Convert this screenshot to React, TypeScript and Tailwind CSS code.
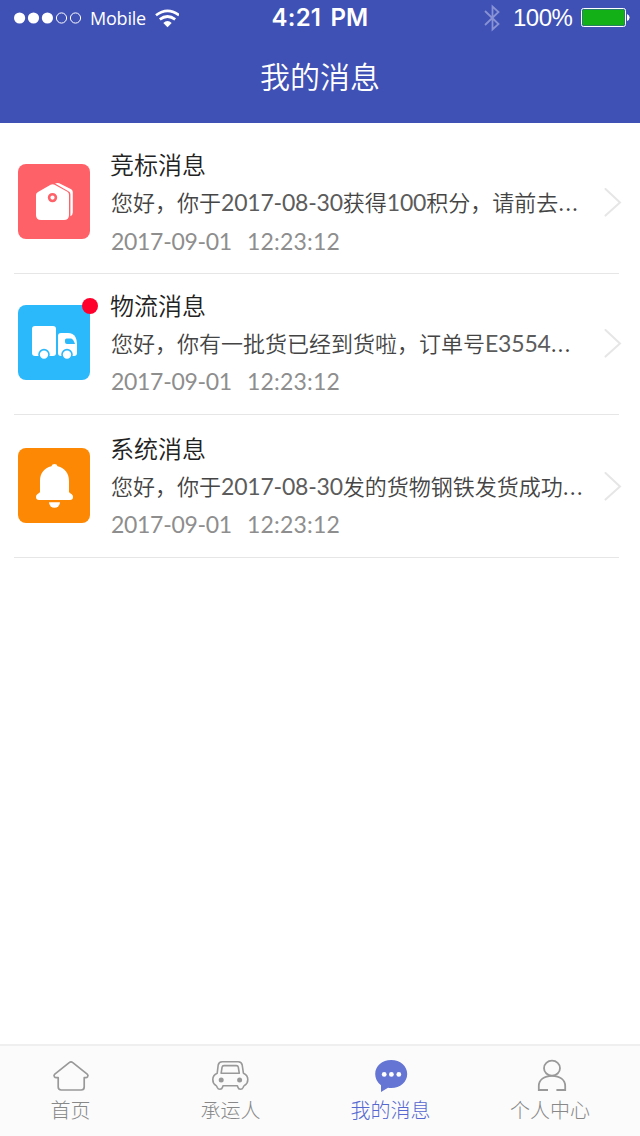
import type { ReactNode } from 'react';

const Chevron = () => (
  <svg className="h-[30px] w-[18px] shrink-0" viewBox="0 0 18 30" fill="none" stroke="#e6e6e6" strokeWidth="2">
    <path d="M1.5 2 16 15.4 1.5 28.6" strokeLinecap="round" />
  </svg>
);

const TagIcon = () => (
  <svg className="h-[75px] w-[72px]" viewBox="0 0 72 75">
    <path d="M37 19.6Q39 18.4 41.2 19.2L53.2 25.3Q54.8 26.2 54.8 28V48.5Q54.8 51 52.4 52.3V30.2Q52.4 28.4 50.8 27.6Z" fill="#fff" />
    <path d="M32.6 20.8Q34.6 19.7 36.6 20.7L49.4 27.8Q51 28.8 51 30.7V51Q51 56 46 56H23Q18 56 18 51V31Q18 29.2 19.6 28.2Z" fill="#fff" />
    <circle cx="34.5" cy="33.6" r="3.4" fill="none" stroke="#ff6169" strokeWidth="2.6" />
  </svg>
);

const TruckIcon = () => (
  <svg className="h-[75px] w-[72px]" viewBox="0 0 72 75">
    <rect x="14" y="21" width="24" height="30" rx="3" fill="#fff" />
    <path d="M43 28H50Q55 28 57.4 32Q59 35 59 39V48Q59 51 56 51H43Q40 51 40 48V31Q40 28 43 28Z" fill="#fff" />
    <path d="M48.5 33.4H52.5Q55.5 33.4 57 39H49Q47 39 47 37V35Q47 33.4 48.5 33.4Z" fill="#2cb9fc" />
    <circle cx="26" cy="49.6" r="5" fill="#fff" stroke="#2cb9fc" strokeWidth="1.6" />
    <circle cx="49" cy="49.6" r="5" fill="#fff" stroke="#2cb9fc" strokeWidth="1.6" />
  </svg>
);

const BellIcon = () => (
  <svg className="h-[75px] w-[72px]" viewBox="0 0 72 75" fill="#fff">
    <path d="M33.4 18.3A3.2 3.2 0 0 1 39.6 18.3C47 20 51 25.5 51 33V43.5C51 45.8 55 45.5 55 49Q55 52 52 52H21Q18 52 18 49C18 45.5 22 45.8 22 43.5V33C22 25.5 26 20 33.4 18.3Z" />
    <path d="M31 54.3H42A5.5 5.5 0 0 1 31 54.3Z" />
  </svg>
);

type Message = {
  title: string;
  text: string[];
  date: string;
  time: string;
  icon: ReactNode;
  color: string;
  row: string;
  timeClass: string;
  unread?: boolean;
};

// text alternates between Chinese and latin runs, the ellipsis is added after it
const messages: Message[] = [
  {
    title: '竞标消息',
    text: ['您好，你于', '2017-08-30', '获得', '100', '积分，请前去'],
    date: '2017-09-01',
    time: '12:23:12',
    icon: <TagIcon />,
    color: 'bg-[#ff6169]',
    row: 'h-[151px] pt-6',
    timeClass: 'h-9 leading-[38px]',
  },
  {
    title: '物流消息',
    text: ['您好，你有一批货已经到货啦，订单号', 'E3554'],
    date: '2017-09-01',
    time: '12:23:12',
    icon: <TruckIcon />,
    color: 'bg-[#2cb9fc]',
    row: 'h-[141px] pt-3.5',
    timeClass: 'h-[34px] leading-9',
    unread: true,
  },
  {
    title: '系统消息',
    text: ['您好，你于', '2017-08-30', '发的货物钢铁发货成功'],
    date: '2017-09-01',
    time: '12:23:12',
    icon: <BellIcon />,
    color: 'bg-[#fd8803]',
    row: 'h-[143px] pt-4',
    timeClass: 'h-[34px] leading-9',
  },
];

const HomeIcon = () => (
  <svg className="h-9 w-10" viewBox="0 0 40 36" fill="none" stroke="#999" strokeWidth="1.7" strokeLinejoin="round">
    <path d="M18.2 4.6Q20 3.2 21.8 4.6L36.2 16.2Q37.6 17.5 36.6 18.8Q36 19.7 34.5 19.7H33.2V29Q33.2 32 30.2 32H10.2Q7.2 32 7.2 29V19.7H5.5Q4 19.7 3.4 18.8Q2.4 17.5 3.8 16.2Z" />
  </svg>
);

const CarIcon = () => (
  <svg className="h-9 w-10" viewBox="0 0 40 36" fill="none" stroke="#999" strokeWidth="1.6" strokeLinejoin="round">
    <g transform="translate(-1 0)">
      <path d="M12.2 3.8H28.2Q31.6 3.8 32.2 7L33.4 15.2Q37.8 17.2 37.8 21.5Q37.8 25.5 34.8 27.2Q33.6 28 33.1 29.5Q32.4 31.2 30.5 31.2Q28.4 31.2 27.9 29.2L27.4 27.7H13L12.5 29.2Q12 31.2 9.9 31.2Q8 31.2 7.3 29.5Q6.8 28 5.6 27.2Q2.8 25.5 2.8 21.5Q2.8 17.2 7.2 15.2L8.2 7Q8.8 3.8 12.2 3.8Z" />
      <path d="M14 7.6H26.4Q28 7.6 28.3 9.2L29.3 15.3H11.1L12.1 9.2Q12.4 7.6 14 7.6Z" />
      <circle cx="11.2" cy="22" r="2.5" fill="#999" stroke="none" />
      <circle cx="29.6" cy="22" r="2.5" fill="#999" stroke="none" />
    </g>
  </svg>
);

const ChatIcon = () => (
  <svg className="h-9 w-10" viewBox="0 0 40 36">
    <path d="M20.2 2C29.2 2 36.2 8 36.2 16S29.2 30 20.2 30Q18.4 30 17 29.8L10 34V27.2Q4.2 23 4.2 16C4.2 8 11.2 2 20.2 2Z" fill="#6475d4" />
    <g fill="#fff">
      <circle cx="13.2" cy="16.4" r="2.4" />
      <circle cx="20.4" cy="16.4" r="2.4" />
      <circle cx="27.8" cy="16.4" r="2.4" />
    </g>
  </svg>
);

const UserIcon = () => (
  <svg className="h-9 w-10" viewBox="0 0 40 36" fill="none" stroke="#999" strokeWidth="1.8">
    <ellipse cx="22" cy="10.2" rx="8" ry="7.5" />
    <path d="M18 32H8.8V28C8.8 22 14 17.8 22 17.8S35.2 22 35.2 28V32H26.4" />
  </svg>
);

const tabs = [
  { label: '首页', icon: <HomeIcon />, shift: 'pr-[19px]' },
  { label: '承运人', icon: <CarIcon />, shift: 'pr-[19px]' },
  { label: '我的消息', icon: <ChatIcon />, shift: 'pr-[19px]', active: true },
  { label: '个人中心', icon: <UserIcon />, shift: 'pr-[20px]' },
];

function StatusBar() {
  return (
    <div className="flex h-9 items-center text-white">
      <div className="flex w-[258px] items-center pl-3.5">
        <svg className="h-3 w-[68px]" viewBox="0 0 68 12" fill="#fff">
          <circle cx="5.6" cy="6" r="5.6" />
          <circle cx="19.5" cy="6" r="5.6" />
          <circle cx="33.4" cy="6" r="5.6" />
          <circle cx="47.5" cy="6" r="5.1" fill="none" stroke="#fff" />
          <circle cx="61.5" cy="6" r="5.1" fill="none" stroke="#fff" />
        </svg>
        <span className="ml-2 w-[65px] font-['Open_Sans',sans-serif] text-[18px] leading-[34px] tracking-[-0.2px]">Mobile</span>
        <svg className="h-[19px] w-6" viewBox="0 0 24 19" fill="none" stroke="#fff" strokeWidth="2.7">
          <path d="M1 6.2Q12.5-2.6 24 6.2" />
          <path d="M4.8 10.4Q12.5 4.6 20.2 10.4" />
          <path d="M8.3 14Q12.5 10 16.7 14L12.5 18.2Z" fill="#fff" stroke="none" />
        </svg>
      </div>
      <span className="w-[124px] whitespace-nowrap text-center font-['Inter','Liberation_Sans',sans-serif] text-[24px] font-semibold leading-9 tracking-[0.2px] [word-spacing:3px]">4:21 PM</span>
      <div className="flex flex-1 items-center justify-end pr-2.5">
        <svg className="mr-[13px] h-7 w-4" viewBox="0 0 16 28" fill="none" stroke="#8892d4" strokeWidth="1.8">
          <path d="M1 7 14.5 20 8.5 25.5V2.5L14.5 8 1 21" />
        </svg>
        <span className="w-[59px] whitespace-nowrap font-['Liberation_Sans',sans-serif] text-[24px] leading-9 tracking-[-0.5px]">100%</span>
        <svg className="ml-2 h-5 w-[50px]" viewBox="0 0 50 20">
          <rect x="1.5" y="0.5" width="44" height="18" rx="2" fill="none" stroke="#fff" />
          <rect x="2.5" y="1.5" width="42" height="16" rx="1" fill="#13b018" />
          <path d="M47 6Q49.6 7 49.6 9.5T47 13Z" fill="#fff" />
        </svg>
      </div>
    </div>
  );
}

export default function App() {
  return (
    <div className="flex h-[1136px] w-[640px] flex-col bg-white font-['Noto_Sans_CJK_SC',sans-serif]">
      <header className="h-[123px] bg-[#3f51b5]">
        <StatusBar />
        <h1 className="h-20 text-center text-[30px] font-[350] leading-[78px] text-white">我的消息</h1>
      </header>

      <main className="flex-1">
        {messages.map((item) => (
          <section key={item.title} className={`ml-3.5 mr-[21px] flex border-b border-[#e6e6e6] ${item.row}`}>
            <div className={`relative ml-1 mt-[17px] h-[75px] w-[72px] shrink-0 rounded-lg ${item.color}`}>
              {item.icon}
              {item.unread && <span className="absolute -right-2 -top-[7px] size-4 rounded-full bg-[#ff002d]" />}
            </div>
            <div className="-mt-px ml-5 w-[494px] shrink-0 whitespace-nowrap">
              <h2 className="h-9 text-[24px] font-[350] leading-9 text-[#222]">{item.title}</h2>
              <p className="h-10 pl-px text-[22px] font-[350] leading-[39px] text-[#444]">
                {item.text.map((run, i) => (
                  <span key={i} className={i % 2 ? "font-['Lato',sans-serif] text-[23px] font-normal tracking-[-0.2px] text-[#5c5c5c]" : ''}>
                    {run}
                  </span>
                ))}
                <span className="tracking-[1px]">...</span>
              </p>
              <p className={`flex pl-px font-['Lato',sans-serif] text-[23px] font-normal text-[#8e8e8e] ${item.timeClass}`}>
                <span className="w-[136px] tracking-[-0.3px]">{item.date}</span>
                <span className="tracking-[0.2px]">{item.time}</span>
              </p>
            </div>
            <div className="-mr-1 mt-10 h-[30px] shrink-0">
              <Chevron />
            </div>
          </section>
        ))}
      </main>

      <nav className="grid h-[92px] grid-cols-4 border-t-2 border-[#efefef] bg-[#fbfbfb]">
        {tabs.map((tab) => (
          <div key={tab.label} className={`flex flex-col items-center pt-3 ${tab.shift}`}>
            {tab.icon}
            <span className={`text-[20px] font-light leading-8 ${tab.active ? 'text-[#5567d0]' : 'text-[#888]'}`}>{tab.label}</span>
          </div>
        ))}
      </nav>
    </div>
  );
}
